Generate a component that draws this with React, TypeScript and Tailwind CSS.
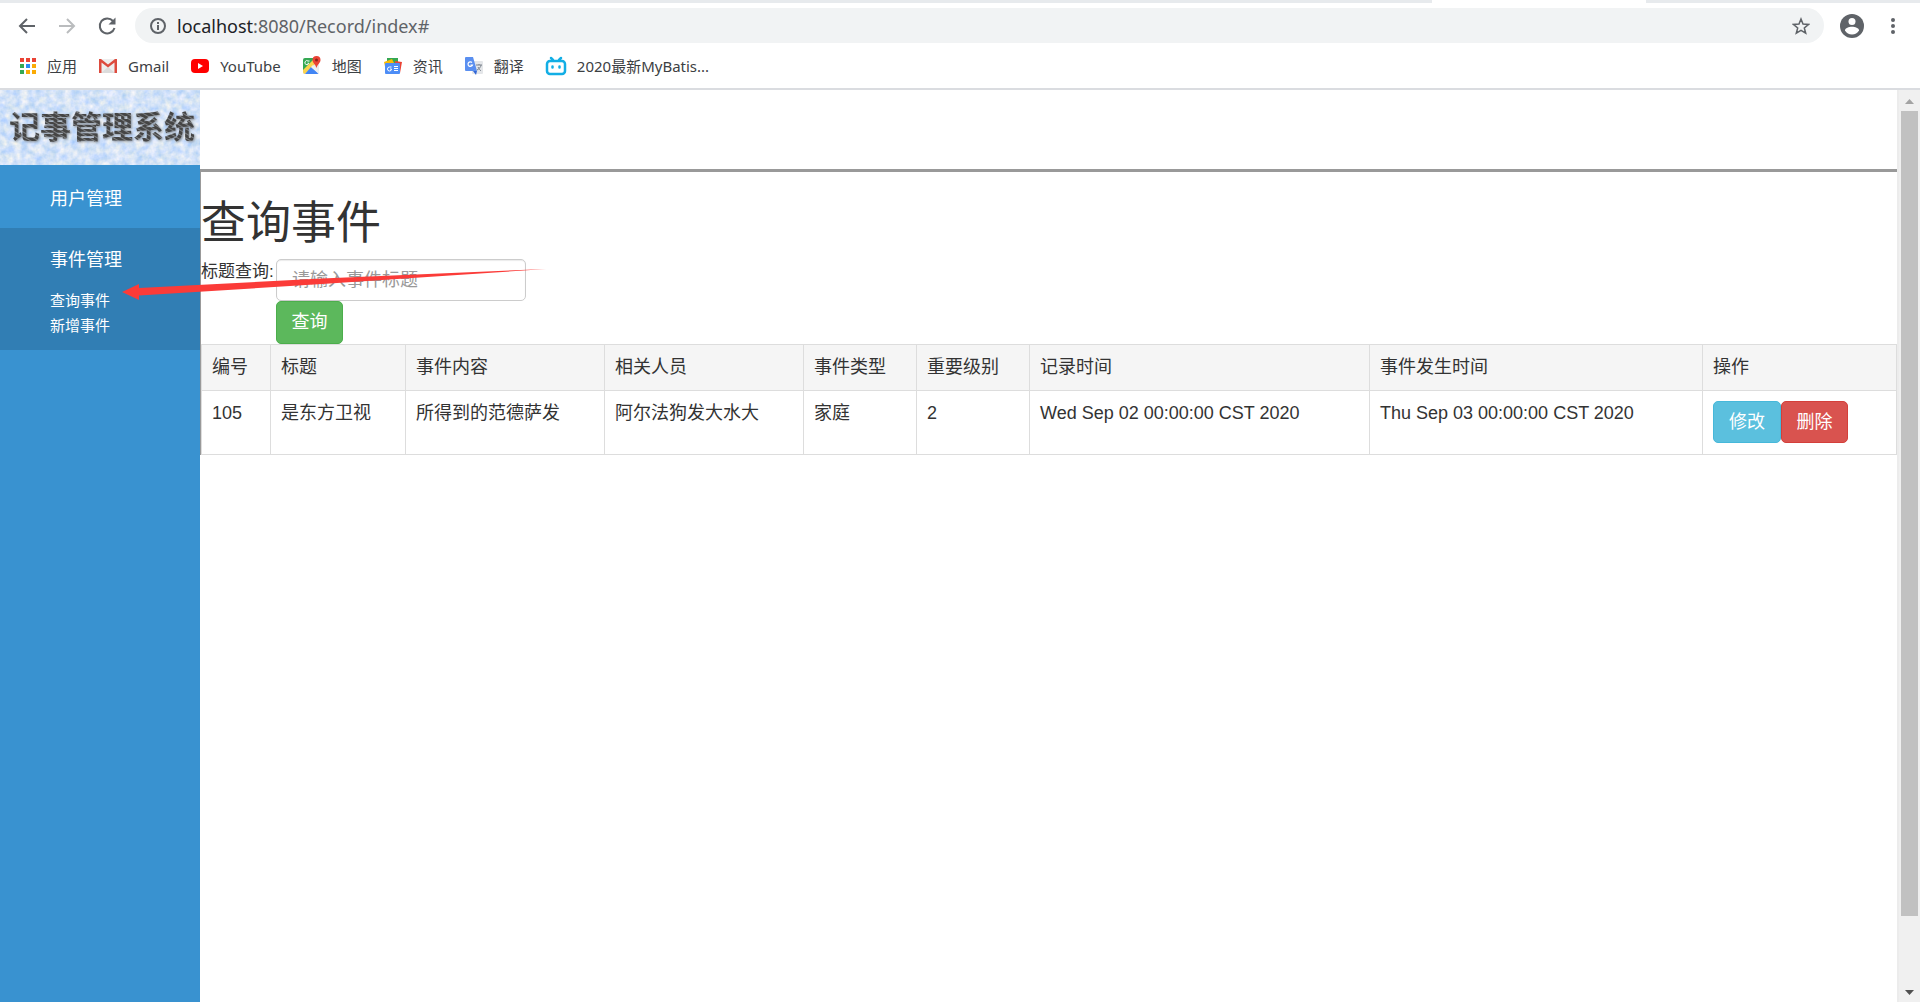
import type { ReactNode } from 'react';

const columns = [
  { title: '编号', width: 'w-[69px]' },
  { title: '标题', width: 'w-[135px]' },
  { title: '事件内容', width: 'w-[199px]' },
  { title: '相关人员', width: 'w-[199px]' },
  { title: '事件类型', width: 'w-[113px]' },
  { title: '重要级别', width: 'w-[113px]' },
  { title: '记录时间', width: 'w-[340px]' },
  { title: '事件发生时间', width: 'w-[333px]' },
  { title: '操作', width: '' },
];

const records = [
  {
    id: 105,
    title: '是东方卫视',
    content: '所得到的范德萨发',
    people: '阿尔法狗发大水大',
    type: '家庭',
    level: 2,
    recordTime: 'Wed Sep 02 00:00:00 CST 2020',
    happenTime: 'Thu Sep 03 00:00:00 CST 2020',
  },
];

function AppsIcon() {
  const colors = ['#ea4335', '#ea4335', '#ea4335', '#34a853', '#2a8cf4', '#fbab05', '#34a853', '#fbab05', '#fbab05'];
  return (
    <svg width="18" height="18" viewBox="0 0 18 18">
      {colors.map((color, i) => (
        <rect key={i} x={1 + (i % 3) * 6} y={1 + Math.floor(i / 3) * 6} width="4" height="4" fill={color} />
      ))}
    </svg>
  );
}

function GmailIcon() {
  return (
    <svg width="20" height="16" viewBox="0 0 20 16">
      <rect x="1" y="1" width="18" height="14" rx="1" fill="#eeeeee" />
      <path d="M3 15 10 9l7 6z" fill="#dcdcdc" />
      <path d="M1 1h2l7 5.500 7-5.500h2v14h-2.500V4.500L10 9.500 3.500 4.500V15H1z" fill="#dd4b3e" />
    </svg>
  );
}

function YouTubeIcon() {
  return (
    <svg width="20" height="16" viewBox="0 0 20 16">
      <rect x="1" y="1" width="18" height="14" rx="4" fill="#ff0000" />
      <path d="M8 5v6l5-3z" fill="#ffffff" />
    </svg>
  );
}

function MapsIcon() {
  return (
    <svg width="20" height="20" viewBox="0 0 20 20">
      <clipPath id="map">
        <rect x="1" y="2" width="16" height="16" rx="2" />
      </clipPath>
      <g clipPath="url(#map)">
        <rect x="1" y="2" width="16" height="16" fill="#e8eaed" />
        <path d="M1 2h14L1 16z" fill="#34a853" />
        <path d="M1 14 14 1l3 3L3 18H1z" fill="#fbd34e" />
        <path d="m3 18 6-7 8 7z" fill="#4285f4" />
        <path d="m9 11 2-2 6 6v3z" fill="#eef0f2" />
      </g>
      <path d="M7.500 5H6a2 2 0 1 0 .8 2.200H5.500" fill="none" stroke="#ffffff" />
      <path d="M14.500 0a4 4 0 0 1 4 4c0 3-3 4-4 8-1-4-4-5-4-8a4 4 0 0 1 4-4z" fill="#ea4335" />
      <circle cx="14.500" cy="4" r="1.500" fill="#8c231b" />
    </svg>
  );
}

function NewsIcon() {
  return (
    <svg width="20" height="18" viewBox="0 0 20 18">
      <path d="M4 1h11v6H4z" fill="#34a853" />
      <path d="m1 5 8-3 2 4-8 8z" fill="#fbbc04" />
      <path d="m12 4 7 1-2 11h-4z" fill="#ea4335" />
      <rect x="2" y="6" width="15" height="11" rx="1" fill="#4d8df6" />
      <path d="M8.500 10H6.500a2 2 0 1 0 2 2H7M11 9.500h4M11 11.500h4M11 13.500h4" fill="none" stroke="#ffffff" />
    </svg>
  );
}

function TranslateIcon() {
  return (
    <svg width="20" height="20" viewBox="0 0 20 20">
      <rect x="8" y="5" width="11" height="13" rx="1" fill="#e4e6e9" />
      <path d="M12 9h6M15 8v1M17 9c0 2-2 4-4 5M14 11c1 2 2 3 3 4" fill="none" stroke="#7a828c" />
      <path d="M9 15h4l-1 4z" fill="#3367d6" />
      <path d="M2 1h7l4 14H2a1 1 0 0 1-1-1V2a1 1 0 0 1 1-1z" fill="#5a8ff0" />
      <path d="M8 6.500A2.300 2.300 0 1 0 8.500 9H6.500" fill="none" stroke="#ffffff" strokeWidth="1.200" />
    </svg>
  );
}

function BilibiliIcon() {
  return (
    <svg width="22" height="20" viewBox="0 0 22 20" fill="none" stroke="#12aee5" strokeWidth="2.500" strokeLinecap="round">
      <rect x="2" y="5" width="18" height="13" rx="3" />
      <path d="m6 2 2 2M16 2l-2 2M7.500 10.500v1M14.500 10.500v1" />
    </svg>
  );
}

function LogoBanner() {
  return (
    <div className="relative flex h-[75px] items-center justify-center overflow-hidden bg-[#d3e4f6]">
      <svg className="absolute inset-0 h-full w-full" aria-hidden="true">
        <filter id="paper" x="0" y="0" width="100%" height="100%" colorInterpolationFilters="sRGB">
          <feTurbulence type="fractalNoise" baseFrequency="0.14" numOctaves="3" seed="4" />
          <feColorMatrix values="0.4 0 0 0 0.63  0.22 0 0 0 0.78  0 0.1 0 0 0.92  0 0 0 0 1" />
        </filter>
        <rect width="100%" height="100%" filter="url(#paper)" />
      </svg>
      <span className="relative bg-[repeating-linear-gradient(30deg,#454545_0px,#454545_2px,#7c7f82_3px,#454545_4px)] bg-clip-text pl-1 text-[31px] leading-10 font-bold text-transparent drop-shadow-[1px_1px_1px_#8a9199]">
        记事管理系统
      </span>
    </div>
  );
}

function Bookmark({ icon, label }: { icon: ReactNode; label: string }) {
  return (
    <a href="#" className="flex items-center gap-[10px] whitespace-nowrap">
      {icon}
      {label}
    </a>
  );
}

function BrowserBar() {
  return (
    <header className="shrink-0 border-b-2 border-[#dadce0] font-['Noto_Sans','Noto_Sans_CJK_SC',sans-serif]">
      <div className="flex h-[3px] bg-[#e7eaed]">
        <div className="ml-auto mr-[274px] w-[214px] bg-white" />
      </div>
      <div className="flex h-[45px] items-center pl-[17px] pr-6 text-[#5f6368]">
        <button aria-label="后退" className="mr-5">
          <svg width="20" height="20" viewBox="0 0 20 20" fill="none" stroke="currentColor" strokeWidth="2">
            <path d="M18 10H3M10 3l-7 7 7 7" />
          </svg>
        </button>
        <button aria-label="前进" className="mr-5 text-[#babcbe]">
          <svg width="20" height="20" viewBox="0 0 20 20" fill="none" stroke="currentColor" strokeWidth="2">
            <path d="M2 10h15M10 3l7 7-7 7" />
          </svg>
        </button>
        <button aria-label="刷新" className="mr-[18px]">
          <svg width="20" height="20" viewBox="0 0 20 20" fill="none" stroke="currentColor" strokeWidth="2">
            <path d="M16 5a7.500 7.500 0 1 0 1.500 7" />
            <path d="M18.500 1.500v7h-7z" fill="currentColor" stroke="none" />
          </svg>
        </button>
        <div className="flex h-[35px] flex-1 items-center rounded-full bg-[#f1f3f4] px-[14px]">
          <svg width="18" height="18" viewBox="0 0 18 18" fill="none" stroke="currentColor" strokeWidth="2">
            <circle cx="9" cy="9" r="7" />
            <path d="M9 8v5M9 5v2" />
          </svg>
          <div className="ml-[10px] flex-1 text-[18px] leading-6">
            <span className="text-[#202124]">localhost</span>:8080/Record/index#
          </div>
          <button aria-label="收藏">
            <svg width="18" height="18" viewBox="0 0 18 18" fill="none" stroke="currentColor" strokeWidth="1.500">
              <path d="m9 2 2 5 5.500.400-4.200 3.500 1.400 5.300L9 13.300l-4.700 2.900 1.400-5.300L1.500 7.400 7 7z" />
            </svg>
          </button>
        </div>
        <button aria-label="用户" className="ml-4">
          <svg width="24" height="24" viewBox="0 0 24 24">
            <circle cx="12" cy="12" r="12" fill="currentColor" />
            <circle cx="12" cy="7.500" r="3.500" fill="#ffffff" />
            <path d="M5 16.500c0-2.500 4-3.700 7-3.700s7 1.200 7 3.700c-1.500 2.400-4 4-7 4s-5.500-1.600-7-4z" fill="#ffffff" />
          </svg>
        </button>
        <button aria-label="菜单" className="ml-[26px]">
          <svg width="6" height="18" viewBox="0 0 6 18" fill="currentColor">
            <circle cx="3" cy="3" r="2" />
            <circle cx="3" cy="9" r="2" />
            <circle cx="3" cy="15" r="2" />
          </svg>
        </button>
      </div>
      <nav className="flex h-10 items-center gap-[21px] pl-[19px] pb-1 text-[15px] text-[#3c4043]">
        <Bookmark icon={<AppsIcon />} label="应用" />
        <Bookmark icon={<GmailIcon />} label="Gmail" />
        <Bookmark icon={<YouTubeIcon />} label="YouTube" />
        <Bookmark icon={<MapsIcon />} label="地图" />
        <Bookmark icon={<NewsIcon />} label="资讯" />
        <Bookmark icon={<TranslateIcon />} label="翻译" />
        <Bookmark icon={<BilibiliIcon />} label="2020最新MyBatis..." />
      </nav>
    </header>
  );
}

function Sidebar() {
  return (
    <aside className="flex w-[200px] shrink-0 flex-col bg-[#3992d0] text-white">
      <LogoBanner />
      <a href="#" className="flex h-[63px] items-center pl-[50px] pt-[6px]">
        用户管理
      </a>
      <div className="h-[122px] bg-[#317eb4] pl-[50px] pt-5">
        <a href="#" className="block leading-6">
          事件管理
        </a>
        <ul className="mt-4 text-[15px] leading-[25px]">
          <li>
            <a href="#">查询事件</a>
          </li>
          <li>
            <a href="#">新增事件</a>
          </li>
        </ul>
      </div>
    </aside>
  );
}

function RecordTable() {
  return (
    <table className="w-full table-fixed border-collapse text-left">
      <thead>
        <tr className="h-[46px] bg-[#f5f5f5]">
          {columns.map((col) => (
            <th key={col.title} className={`border border-[#dddddd] px-[10px] font-normal ${col.width}`}>
              {col.title}
            </th>
          ))}
        </tr>
      </thead>
      <tbody>
        {records.map((r) => (
          <tr key={r.id} className="h-16 align-top">
            <td className="border border-[#dddddd] p-[10px]">{r.id}</td>
            <td className="border border-[#dddddd] p-[10px]">{r.title}</td>
            <td className="border border-[#dddddd] p-[10px]">{r.content}</td>
            <td className="border border-[#dddddd] p-[10px]">{r.people}</td>
            <td className="border border-[#dddddd] p-[10px]">{r.type}</td>
            <td className="border border-[#dddddd] p-[10px]">{r.level}</td>
            <td className="border border-[#dddddd] p-[10px]">{r.recordTime}</td>
            <td className="border border-[#dddddd] p-[10px]">{r.happenTime}</td>
            <td className="border border-[#dddddd] p-[10px]">
              <div className="flex">
                <button className="h-[42px] w-[68px] rounded-[5px] border border-[#46b8da] bg-[#5bc0de] text-white">
                  修改
                </button>
                <button className="h-[42px] w-[67px] rounded-[5px] border border-[#d43f3a] bg-[#d9534f] text-white">
                  删除
                </button>
              </div>
            </td>
          </tr>
        ))}
      </tbody>
    </table>
  );
}

function Scrollbar() {
  return (
    <div className="flex w-[23px] shrink-0 flex-col items-center border-l-2 border-[#ececec] bg-[#f0f0f0]">
      <svg className="my-[7px]" width="9" height="7" viewBox="0 0 9 7">
        <path d="m4.500 2 4.500 5H0z" fill="#a3a3a3" />
      </svg>
      <div className="w-[17px] grow-[12] bg-[#c1c1c1]" />
      <div className="grow" />
      <svg className="my-[7px]" width="9" height="5" viewBox="0 0 9 5">
        <path d="m4.500 5 4.500-5H0z" fill="#505050" />
      </svg>
    </div>
  );
}

export default function App() {
  return (
    <div className="relative flex min-h-screen flex-col bg-white font-['Liberation_Sans','Noto_Sans_CJK_SC',sans-serif] text-[18px] leading-[25px] text-[#333333]">
      <BrowserBar />
      <div className="flex flex-1">
        <Sidebar />
        <main className="min-w-0 flex-1">
          <div className="h-[79px]" />
          <div className="border-l border-t-[3px] border-[#999999]">
            <h1 className="mt-[27px] text-[45px] leading-[50px]">查询事件</h1>
            <form className="mt-[10px] flex items-start">
              <label htmlFor="title" className="w-[75px] text-[17px] whitespace-nowrap">
                标题查询:
              </label>
              <div className="flex flex-col items-start">
                <input
                  id="title"
                  type="text"
                  placeholder="请输入事件标题"
                  className="h-[42px] w-[250px] rounded-[5px] border border-[#cccccc] px-[15px] shadow-[inset_0_1px_1px_rgba(0,0,0,0.08)] placeholder:text-[#999999]"
                />
                <button
                  type="button"
                  className="h-[43px] w-[67px] rounded-[5px] border border-[#4cae4c] bg-[#5cb85c] text-white"
                >
                  查询
                </button>
              </div>
            </form>
            <RecordTable />
          </div>
        </main>
        <Scrollbar />
      </div>
      {/* pointer to the active menu item */}
      <svg className="pointer-events-none absolute left-[122px] top-[265px]" width="428" height="36" viewBox="0 0 428 36">
        <path d="M0 27 17 19v4L200 13.500 424 4 200 19 17 30.500V35z" fill="#fb3b38" />
      </svg>
    </div>
  );
}
